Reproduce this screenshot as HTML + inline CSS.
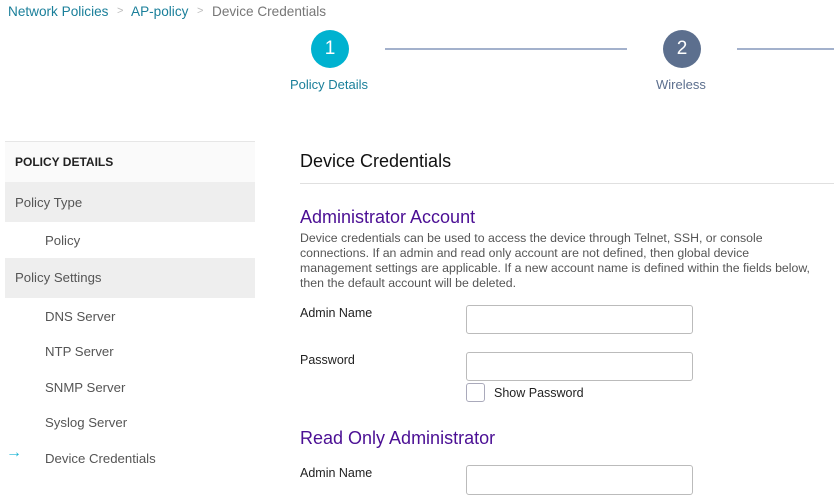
<!DOCTYPE html>
<html><head><meta charset="utf-8"><style>
*{margin:0;padding:0;box-sizing:border-box}
body{width:834px;height:482px;overflow:hidden;background:#fff;font-family:"Liberation Sans",sans-serif;position:relative;color:#333}
.a{position:absolute;white-space:nowrap;line-height:1}
.bc{top:5px;font-size:13.6px}
.circ{position:absolute;width:38px;height:38px;border-radius:50%;color:#fff;font-size:19px;text-align:center;line-height:38px}
.ln{position:absolute;height:2px;background:#a3b1cc;top:48px}
.row{position:absolute;left:5px;width:250px;height:40px;background:#eee}
.side{font-size:13.2px;color:#555}
.inp{position:absolute;left:466px;width:227px;height:30px;border:1px solid #bbb;border-radius:3px;background:#fff}
.lbl{font-size:12.5px;color:#222;left:300px}
.h{font-size:18px;color:#4b0f94;left:300px}
.d{position:absolute;left:300px;top:231px;font-size:12.3px;line-height:15px;color:#555;white-space:nowrap}
</style></head><body>
<div class="a bc" style="left:8px;color:#1a7f9a">Network Policies</div>
<div class="a bc" style="left:117px;color:#bbb;font-size:11px;top:6px">&gt;</div>
<div class="a bc" style="left:131px;color:#1a7f9a">AP-policy</div>
<div class="a bc" style="left:197px;color:#bbb;font-size:11px;top:6px">&gt;</div>
<div class="a bc" style="left:212px;color:#777">Device Credentials</div>

<div class="circ" style="left:311px;top:30px;background:#00b2d0">1</div>
<div class="ln" style="left:385px;width:242px"></div>
<div class="circ" style="left:663px;top:30px;background:#5c6f8e">2</div>
<div class="ln" style="left:737px;width:97px"></div>
<div class="a" style="left:290px;top:78px;font-size:13px;color:#1a7f9a">Policy Details</div>
<div class="a" style="left:656px;top:78px;font-size:13px;color:#5c6f8e">Wireless</div>

<div style="position:absolute;left:5px;top:141px;width:250px;height:1px;background:#e6e6e6"></div>
<div style="position:absolute;left:5px;top:142px;width:250px;height:40px;background:#fafafa"></div>
<div class="a" style="left:15px;top:156px;font-size:12px;font-weight:bold;color:#222">POLICY DETAILS</div>
<div class="row" style="top:182px"></div>
<div class="a side" style="left:15px;top:196px">Policy Type</div>
<div class="a side" style="left:45px;top:234px">Policy</div>
<div class="row" style="top:258px"></div>
<div class="a side" style="left:15px;top:271px">Policy Settings</div>
<div class="a side" style="left:45px;top:310px">DNS Server</div>
<div class="a side" style="left:45px;top:345px">NTP Server</div>
<div class="a side" style="left:45px;top:381px">SNMP Server</div>
<div class="a side" style="left:45px;top:416px">Syslog Server</div>
<div class="a" style="left:6px;top:445px;font-size:16px;color:#1fb6d4">→</div>
<div class="a side" style="left:45px;top:452px">Device Credentials</div>

<div class="a" style="left:300px;top:152px;font-size:18px;color:#111">Device Credentials</div>
<div style="position:absolute;left:300px;top:183px;width:534px;height:1px;background:#e0e0e0"></div>
<div class="a h" style="top:208px">Administrator Account</div>
<div class="d">Device credentials can be used to access the device through Telnet, SSH, or console<br>connections. If an admin and read only account are not defined, then global device<br>management settings are applicable. If a new account name is defined within the fields below,<br>then the default account will be deleted.</div>
<div class="a lbl" style="top:307px">Admin Name</div>
<div class="inp" style="top:305px;height:29px"></div>
<div class="a lbl" style="top:354px">Password</div>
<div class="inp" style="top:352px;height:29px"></div>
<div style="position:absolute;left:466px;top:383px;width:19px;height:19px;border:1px solid #aab;border-radius:3px"></div>
<div class="a" style="left:494px;top:387px;font-size:12.5px;color:#222">Show Password</div>
<div class="a h" style="top:429px">Read Only Administrator</div>
<div class="a lbl" style="top:467px">Admin Name</div>
<div class="inp" style="top:465px"></div>
</body></html>
